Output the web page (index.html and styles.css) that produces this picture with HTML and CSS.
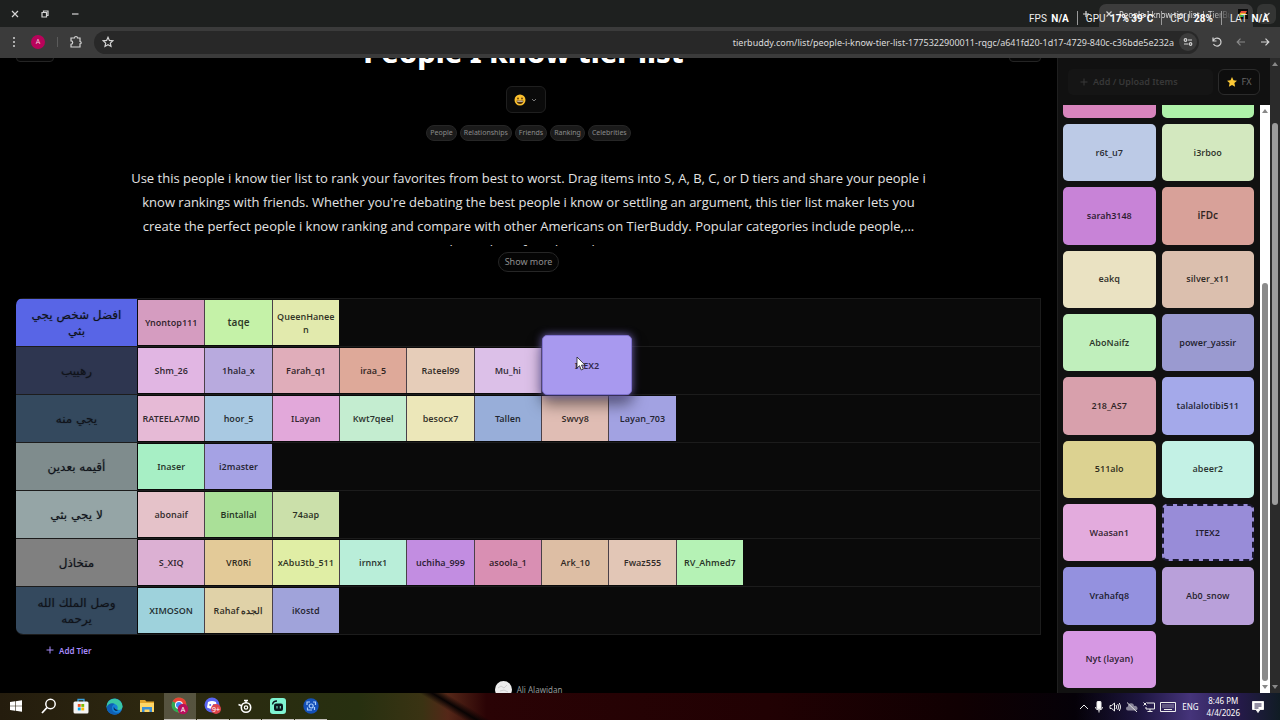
FILE: index.html
```html
<!DOCTYPE html>
<html lang="en">
<head>
<meta charset="utf-8">
<title>People I know tier list | TierBuddy</title>
<link rel="stylesheet" href="styles.css">
</head>
<body>
<header class="titlebar">
  <div class="window-controls">
    <button class="icon-btn" aria-label="Close window"><svg width="10" height="10" viewBox="0 0 10 10"><path d="M2 2l6 6M8 2l-6 6"/></svg></button>
    <button class="icon-btn" aria-label="Restore window"><svg width="10" height="10" viewBox="0 0 10 10"><path d="M2 3.5h4.5v4.500H2zM3.500 3.500V2H8v4.500H6.500"/></svg></button>
    <button class="icon-btn" aria-label="Minimize window"><svg width="10" height="10" viewBox="0 0 10 10"><path d="M2 5h6.500"/></svg></button>
  </div>
  <div class="tabs">
    <button class="icon-btn" aria-label="New tab"><svg width="10" height="10" viewBox="0 0 10 10"><path d="M5 2v6M2 5h6"/></svg></button>
    <div class="tab">
      <button class="icon-btn" aria-label="Close tab"><svg width="8" height="8" viewBox="0 0 8 8"><path d="M1.500 1.500l5 5M6.500 1.500l-5 5"/></svg></button>
      <span class="tab-title">People I know tier list | TierBuddy</span>
      <svg class="favicon" width="10" height="10" viewBox="0 0 10 10"><rect width="10" height="10" fill="#0b0b0b"/><path d="M3 2h6L8 4H2z" fill="#e5533d"/><path d="M2 4h6L7 6H1z" fill="#f0b429"/><path d="M2 6h4L5 8H2z" fill="#37b24d"/></svg>
    </div>
    <button class="tab-search" aria-label="Search tabs"><svg width="8" height="8" viewBox="0 0 8 8"><path d="M1.500 3L4 5.500 6.500 3"/></svg></button>
  </div>
  <div class="overlay">
    <span>FPS <b>N/A</b></span><span>GPU <b>17% 39°C</b></span><span>CPU <b>28%</b></span><span>LAT <b>N/A</b></span>
  </div>
</header>

<nav class="toolbar">
  <button class="icon-btn" aria-label="Menu"><svg width="12" height="12" viewBox="0 0 12 12"><g class="solid"><circle cx="6" cy="2" r="1"/><circle cx="6" cy="6" r="1"/><circle cx="6" cy="10" r="1"/></g></svg></button>
  <button class="avatar" aria-label="Profile">A</button>
  <span class="separator"></span>
  <button class="icon-btn" aria-label="Extensions"><svg width="14" height="14" viewBox="0 0 14 14"><path d="M2 3h3.500a1.500 1.500 0 0 1 3 0H11v3.500a1.200 1.200 0 0 1 0 2.400V12H2V9.300a1.700 1.700 0 0 0 0-3.400z"/></svg></button>
  <div class="address">
    <button class="icon-btn" aria-label="Bookmark"><svg width="12" height="12" viewBox="0 0 12 12"><path d="M6 1.300l1.400 3.100 3.400.4-2.500 2.300.7 3.300L6 8.700l-3 1.700.7-3.300L1.200 4.800l3.400-.4z"/></svg></button>
    <input class="url" aria-label="Address" value="tierbuddy.com/list/people-i-know-tier-list-1775322900011-rqgc/a641fd20-1d17-4729-840c-c36bde5e232a">
    <button class="site-info" aria-label="Site information"><svg width="10" height="10" viewBox="0 0 10 10"><path d="M5 3h4M1 7h4"/><circle cx="2.500" cy="3" r="1.300"/><circle cx="7.500" cy="7" r="1.300"/></svg></button>
  </div>
  <div class="nav-buttons">
    <button class="icon-btn" aria-label="Reload"><svg width="12" height="12" viewBox="0 0 12 12"><path d="M2 1.500V5h3.500M2.300 4.600A4 4 0 1 1 2.500 8"/></svg></button>
    <button class="icon-btn dim" aria-label="Forward"><svg width="12" height="12" viewBox="0 0 12 12"><path d="M10 6H2.500M5.500 2.700L2.200 6l3.300 3.300"/></svg></button>
    <button class="icon-btn" aria-label="Back"><svg width="12" height="12" viewBox="0 0 12 12"><path d="M2 6h7.500M6.500 2.700L9.800 6 6.500 9.300"/></svg></button>
  </div>
</nav>

<div class="page">
  <main class="main">
    <div class="hero">
      <button class="corner-btn" aria-label="Back to lists"></button>
      <h1>People I know tier list</h1>
      <button class="corner-btn corner-end" aria-label="Options"></button>
    </div>
    <button class="emoji-btn" aria-label="React">
      <svg width="12" height="12" viewBox="0 0 12 12"><circle cx="6" cy="6" r="5.500" fill="#fbc02d"/><ellipse cx="4" cy="4.500" rx=".8" ry="1.100" fill="#4e2f0b"/><ellipse cx="8" cy="4.500" rx=".8" ry="1.100" fill="#4e2f0b"/><path d="M2.600 6.500h6.800a3.400 3.400 0 0 1-6.800 0z" fill="#4e2f0b"/><path d="M3.200 6.800h5.600v.8H3.200z" fill="#fff"/></svg>
      <svg class="chevron" width="6" height="6" viewBox="0 0 6 6"><path d="M1 2l2 2 2-2"/></svg>
    </button>
    <div class="tags"><a href="#">People</a><a href="#">Relationships</a><a href="#">Friends</a><a href="#">Ranking</a><a href="#">Celebrities</a></div>
    <p class="description">Use this people i know tier list to rank your favorites from best to worst. Drag items into S, A, B, C, or D tiers and share your people i<br>know rankings with friends. Whether you're debating the best people i know or settling an argument, this tier list maker lets you<br>create the perfect people i know ranking and compare with other Americans on TierBuddy. Popular categories include people,...<br>relationships, friends, ranking.</p>
    <button class="show-more">Show more</button>

    <section class="tiers">
      <div class="tier"><div class="label" dir="rtl" style="--tile:#5865e6">افضل شخص يجي بثي</div><div class="items">
        <div class="item" style="--tile:#d59cc0">Ynontop111</div><div class="item large" style="--tile:#c5f2a8">taqe</div><div class="item" style="--tile:#e2eaad">QueenHaneen</div></div></div>
      <div class="tier"><div class="label" dir="rtl" style="--tile:#2e3650">رهييب</div><div class="items">
        <div class="item" style="--tile:#e1b6e3">Shm_26</div><div class="item" style="--tile:#b8aade">1hala_x</div><div class="item" style="--tile:#e0adba">Farah_q1</div><div class="item" style="--tile:#dea999">iraa_5</div><div class="item" style="--tile:#e6cdb9">Rateel99</div><div class="item" style="--tile:#dcc0e8">Mu_hi</div>
        <div class="drop-slot"><div class="dragged">ITEX2<svg class="cursor" width="10" height="15" viewBox="0 0 10 15"><path d="M1 1v11l2.500-2.300L5.300 14l2-.9-1.800-4H9z" fill="#fff" stroke="#222" stroke-width=".8"/></svg></div></div></div></div>
      <div class="tier"><div class="label" dir="rtl" style="--tile:#34495e">يجي منه</div><div class="items">
        <div class="item" style="--tile:#e6bad6">RATEELA7MD</div><div class="item" style="--tile:#a9c9e2">hoor_5</div><div class="item" style="--tile:#e2a8da">ILayan</div><div class="item" style="--tile:#c4edd0">Kwt7qeel</div><div class="item" style="--tile:#ece7b9">besocx7</div><div class="item" style="--tile:#98aed9">Tallen</div><div class="item" style="--tile:#e0bdb4">Swvy8</div><div class="item" style="--tile:#a2a2e2">Layan_703</div></div></div>
      <div class="tier"><div class="label" dir="rtl" style="--tile:#7f8c8d">أقيمه بعدين</div><div class="items">
        <div class="item" style="--tile:#a7efc5">Inaser</div><div class="item" style="--tile:#a5a2e4">i2master</div></div></div>
      <div class="tier"><div class="label" dir="rtl" style="--tile:#95a5a6">لا يجي بثي</div><div class="items">
        <div class="item" style="--tile:#e5c2c9">abonaif</div><div class="item" style="--tile:#aae098">Bintallal</div><div class="item" style="--tile:#cbe0aa">74aap</div></div></div>
      <div class="tier"><div class="label" dir="rtl" style="--tile:#808080">متخاذل</div><div class="items">
        <div class="item" style="--tile:#dcb0d3">S_XIQ</div><div class="item" style="--tile:#e3ca98">VR0Ri</div><div class="item" style="--tile:#e0eea5">xAbu3tb_511</div><div class="item" style="--tile:#b9eed9">irnnx1</div><div class="item" style="--tile:#c28de1">uchiha_999</div><div class="item" style="--tile:#d98fb3">asoola_1</div><div class="item" style="--tile:#ddbea4">Ark_10</div><div class="item" style="--tile:#e2c6b6">Fwaz555</div><div class="item" style="--tile:#b5f2b5">RV_Ahmed7</div></div></div>
      <div class="tier"><div class="label" dir="rtl" style="--tile:#34495e">وصل الملك الله يرحمه</div><div class="items">
        <div class="item" style="--tile:#9ed2dc">XIMOSON</div><div class="item" style="--tile:#e0d2a8">Rahaf الجده</div><div class="item" style="--tile:#a0a3da">iKostd</div></div></div>
    </section>
    <button class="add-tier"><svg width="8" height="8" viewBox="0 0 8 8"><path d="M4 .5v7M.5 4h7"/></svg>Add Tier</button>
    <div class="author"><svg width="17" height="17" viewBox="0 0 17 17"><circle cx="8.500" cy="8.500" r="8.500" fill="#ececec"/><path d="M3 7l3-2 3 2 3-3M5 10l4-1 4 2" stroke="#cfcfcf"/></svg><span>Ali Alawidan</span></div>
  </main>

  <aside class="sidebar">
    <div class="sidebar-head">
      <button class="upload"><svg width="8" height="8" viewBox="0 0 8 8"><path d="M4 .5v7M.5 4h7"/></svg>Add / Upload Items</button>
      <button class="fx"><svg width="10" height="10" viewBox="0 0 10 10"><path d="M5 0l1.500 3.300 3.500.4-2.600 2.400.7 3.600L5 7.900 1.900 9.700l.7-3.600L0 3.700l3.500-.4z" fill="#fcc936"/></svg>FX</button>
    </div>
    <div class="pool">
      <div class="cards">
        <div class="card" style="--tile:#d884bd"></div><div class="card" style="--tile:#aff2a9"></div>
        <div class="card" style="--tile:#bccae6">r6t_u7</div><div class="card" style="--tile:#d3e8bf">i3rboo</div>
        <div class="card" style="--tile:#c883d7">sarah3148</div><div class="card large" style="--tile:#d8a199">iFDc</div>
        <div class="card" style="--tile:#eae2c2">eakq</div><div class="card" style="--tile:#dbbfae">silver_x11</div>
        <div class="card" style="--tile:#c0efbc">AboNaifz</div><div class="card" style="--tile:#9a9ad0">power_yassir</div>
        <div class="card" style="--tile:#d8a0ac">218_AS7</div><div class="card" style="--tile:#a4a9ea">talalalotibi511</div>
        <div class="card" style="--tile:#dcd291">511alo</div><div class="card" style="--tile:#c3f1e5">abeer2</div>
        <div class="card" style="--tile:#e3abdd">Waasan1</div><div class="card picked" style="--tile:#988cd8">ITEX2</div>
        <div class="card" style="--tile:#9491df">Vrahafq8</div><div class="card" style="--tile:#b9a0da">Ab0_snow</div>
        <div class="card" style="--tile:#d698e3">Nyt (layan)</div>
      </div>
      <div class="scroll light"><i class="up"></i><div class="track"><div class="thumb"></div></div><i class="down"></i></div>
    </div>
  </aside>
  <div class="scroll dark"><i class="up"></i><div class="track"><div class="thumb"></div></div><i class="down"></i></div>
</div>

<footer class="taskbar">
  <div class="apps">
    <button aria-label="Start"><svg width="14" height="14" viewBox="0 0 14 14"><path d="M1 3l5-.7v4.400H1zM6.600 2.200L13 1.300v5.400H6.600zM1 7.300h5v4.400L1 11zM6.600 7.300H13v5.400l-6.400-.9z" fill="#fff"/></svg></button>
    <button aria-label="Search"><svg width="16" height="16" viewBox="0 0 16 16"><circle cx="9.500" cy="6" r="4.700" stroke="#fff" stroke-width="1.500"/><path d="M6 9.500L1 15" stroke="#fff" stroke-width="1.800"/></svg></button>
    <button aria-label="Store"><svg width="16" height="16" viewBox="0 0 16 16"><path d="M5 4V1.500h6V4" stroke="#3aa0dd" stroke-width="1.300"/><rect x=".5" y="3.500" width="15" height="12" rx="1.500" fill="#f4f4f4"/><path d="M4.800 6h2.900v2.900H4.800z" fill="#f25022"/><path d="M8.300 6h2.900v2.900H8.300z" fill="#7fba00"/><path d="M4.800 9.500h2.900v2.900H4.800z" fill="#00a4ef"/><path d="M8.300 9.500h2.900v2.900H8.300z" fill="#ffb900"/></svg></button>
    <button aria-label="Edge"><svg width="17" height="17" viewBox="0 0 17 17"><circle cx="8.500" cy="8.500" r="8" fill="#1583d8"/><path d="M1 6a8 8 0 0 1 15.500 2.500c0 3-3 4-5.500 3 1.500-2 .5-5-2.500-5.500C5 5.400 2 7 .6 9.500z" fill="#39c7a5"/><path d="M.6 9.500C2 5.500 6 4.500 9 6 5.500 7 5 11 7.500 13.500c2 1.700 5 1.500 7.500 0-2 3-6 4-9.500 2.500A8 8 0 0 1 .6 9.500z" fill="#0e5fb4"/><path d="M8 8.500c0 2 1.500 3.500 4.500 3.500L10 13C8 12.500 7 10.500 8 8.500z" fill="#0b2540"/></svg></button>
    <button aria-label="File Explorer"><svg width="16" height="14" viewBox="0 0 16 14"><path d="M1 1h5l1.500 1.500H15V12H1z" fill="#e3a52a"/><path d="M1 4h14v9H1z" fill="#ffd766"/><path d="M3 8h10v5h-2.500v-2.500h-5V13H3z" fill="#3c90d6"/></svg></button>
    <button class="open active" aria-label="Chrome"><svg width="18" height="18" viewBox="0 0 18 18"><circle cx="8" cy="8" r="7.500" fill="#34a853"/><path d="M1.500 4.300A7.500 7.500 0 0 1 15.500 8H8z" fill="#ea4335"/><path d="M8 8h7.500a7.500 7.500 0 0 1-8 7.500z" fill="#fbbc05"/><circle cx="8" cy="8" r="4" fill="#fff"/><circle cx="8" cy="8" r="3" fill="#4285f4"/><circle cx="12" cy="12" r="5.300" fill="#b80f5c"/><text class="badge-text" x="12" y="15">A</text></svg></button>
    <button class="open" aria-label="Discord"><svg width="18" height="18" viewBox="0 0 18 18"><circle cx="8" cy="8" r="7.500" fill="#5865f2"/><path d="M4 5q4-1.800 8 0l1 5.500q-5 2.500-10 0z" fill="#fff"/><circle cx="6.200" cy="8" r="1" fill="#5865f2"/><circle cx="9.800" cy="8" r="1" fill="#5865f2"/><circle cx="12" cy="12" r="5" fill="#dd444c"/><text class="badge-text" x="12" y="15">9+</text></svg></button>
    <button class="open" aria-label="SteelSeries"><svg width="16" height="16" viewBox="0 0 16 16"><circle cx="9" cy="9.500" r="4.700" stroke="#fff" stroke-width="1.600"/><circle cx="9" cy="9.500" r="1.700" stroke="#fff" stroke-width="1.200"/><path d="M1.500 6.500L5 8M7 2.500h4M9 2.500V5" stroke="#fff" stroke-width="1.500"/></svg></button>
    <button class="open" aria-label="Streamlabs"><svg width="16" height="16" viewBox="0 0 16 16"><rect width="16" height="16" rx="3" fill="#80f5d2"/><rect x="4" y="5.500" width="9" height="7.500" rx="2" fill="#09161d"/><path d="M2.500 6.500Q3 3 7 3" stroke="#09161d" stroke-width="1.300"/><path d="M7 8v2.500M10.300 8v2.500" stroke="#80f5d2"/></svg></button>
    <button class="open" aria-label="Capture"><svg width="16" height="16" viewBox="0 0 16 16"><circle cx="8" cy="8" r="7.700" fill="#1450b8"/><path d="M7 4H4v3M9 12H4.500V9.500M10 4h2.500v3M11.500 9v3" stroke="#a9cdfb" stroke-width="1.200"/><circle cx="8.200" cy="8" r="2" stroke="#a9cdfb" stroke-width="1.200"/></svg></button>
  </div>
  <div class="tray">
    <svg width="10" height="10" viewBox="0 0 10 10"><path d="M1 7l4-4 4 4"/></svg>
    <svg width="10" height="12" viewBox="0 0 10 12"><rect x="3" y="0" width="4" height="8" rx="1.500" fill="#fff"/><path d="M1.500 6q0 3 3.500 3t3.500-3M5 9v2.500"/></svg>
    <svg width="12" height="12" viewBox="0 0 12 12"><path d="M1 4.500h1.700L5.500 2v8L2.700 7.500H1zM7 4q1.500 2 0 4M8.700 3q2.300 3 0 6M10.300 2q3 4 0 8"/></svg>
    <svg width="12" height="12" viewBox="0 0 12 12"><path d="M2 9.500a2 2 0 0 1 0-4 3 3 0 0 1 6-.5 2.300 2.300 0 0 1 2 4.500z" fill="#8b879b" stroke="none"/><path d="M1 1.500l10 9.500" stroke="#ddd"/></svg>
    <svg width="12" height="12" viewBox="0 0 12 12"><path d="M4 2h7.500v6H3V6M7 8v2.500M4.500 10.500h5M.5 1.500l3 3M3.500 1.500l-3 3"/></svg>
    <svg width="16" height="10" viewBox="0 0 16 10"><path d="M.5 .5h15v9H.5z"/><path d="M2.500 3h11M2.500 5h11" stroke-dasharray="1 1"/><path d="M4 7.500h8"/></svg>
    <span class="lang">ENG</span>
    <time class="clock">8:46 PM<br>4/4/2026</time>
    <svg width="12" height="12" viewBox="0 0 12 12"><path d="M.5 .5h11v8H8L6 11.500 4 8.500H.5z" fill="#fff"/><path d="M2.500 3h7M2.500 5h7M2.500 7h4" stroke="#28204a"/></svg>
  </div>
</footer>
</body>
</html>
```
FILE: styles.css
```css
* { box-sizing: border-box; }
body {
  margin: 0;
  height: 100vh;
  display: flex;
  flex-direction: column;
  overflow: hidden;
  background: #000;
  color: #e8e8e8;
  font-family: "Noto Sans", "Open Sans", sans-serif;
  font-size: 10px;
}
button, input { font: inherit; color: inherit; background: none; border: 0; padding: 0; margin: 0; }
a { color: inherit; text-decoration: none; }
svg { fill: none; stroke: none; display: block; flex: none; }
.icon-btn svg, .tab-search svg, .site-info svg { stroke: #d5d5d5; stroke-width: 1.2; }
.icon-btn { display: flex; align-items: center; justify-content: center; }
.icon-btn .solid { fill: #d5d5d5; stroke: none; }
.icon-btn.dim { opacity: .5; }

.titlebar { position: relative; flex: none; height: 27px; display: flex; justify-content: space-between; background: #1e201f; }
.window-controls { display: flex; align-items: center; gap: 20px; padding-left: 10px; }
.tabs { display: flex; align-items: center; gap: 4px; padding: 4px 4px 0 0; }
.tabs > .icon-btn { margin: 0 4px 4px 0; }
.tab { display: flex; align-items: center; width: 154px; height: 23px; padding: 0 5px 3px 6px; background: #3c3c3c; border-radius: 7px 7px 0 0; }
.tab-title { flex: 1; margin: 0 6px; overflow: hidden; white-space: nowrap; font-size: 8px; color: #ddd; -webkit-mask-image: linear-gradient(90deg, #000 80%, transparent); mask-image: linear-gradient(90deg, #000 80%, transparent); }
.tab-search { width: 19px; height: 20px; margin-bottom: 3px; border-radius: 6px; background: #343534; display: flex; align-items: center; justify-content: center; }
.overlay { position: absolute; right: 11px; top: 11px; display: flex; gap: 17px; font-family: Roboto, sans-serif; font-size: 10px; line-height: 16px; color: #eee; white-space: nowrap; }
.overlay span { position: relative; }
.overlay span + span::before { content: ""; position: absolute; left: -9px; top: 0; height: 14px; border-left: 1px solid #999; }
.overlay b { margin-left: 2px; color: #fff; }

.toolbar { flex: none; height: 31px; display: flex; align-items: center; background: #3b3b3b; padding: 0 8px 1px; }
.avatar { width: 14px; height: 14px; margin-left: 11px; border-radius: 50%; background: #b8035a; color: #f5c8dc; font-size: 7px; line-height: 14px; }
.separator { width: 1px; height: 10px; margin: 0 11px 0 12px; background: #5b5b5b; }
.address { flex: 1; display: flex; align-items: center; height: 23px; margin-left: 11px; padding: 0 2px 0 8px; border-radius: 12px; background: #282828; }
.url { flex: 1; min-width: 0; margin: 0 5px; text-align: right; font-size: 9px; color: #dcdcdc; outline: 0; }
.site-info { width: 18px; height: 18px; border-radius: 50%; background: #3c3c3c; display: flex; align-items: center; justify-content: center; }
.nav-buttons { display: flex; gap: 12px; padding: 0 1px 0 12px; }

.page { flex: 1; min-height: 0; display: flex; }
.main { flex: 1; min-width: 0; overflow: hidden; display: flex; flex-direction: column; align-items: center; padding: 0 16px; }
.hero { align-self: stretch; display: flex; align-items: flex-end; justify-content: space-between; height: 40px; margin-top: -27px; flex: none; }
.hero h1 { margin: 0 16px 0 0; font-size: 29px; line-height: 38px; font-weight: 800; color: #fff; white-space: nowrap; }
.corner-btn { width: 38px; height: 30px; margin-bottom: 9px; border: 1px solid #242424; border-radius: 4px; background: #070707; }
.corner-end { width: 32px; }
.emoji-btn { flex: none; display: flex; align-items: center; justify-content: center; gap: 5px; width: 40px; height: 27px; margin: 15px 6px 0 0; border: 1px solid #1f1f1f; border-radius: 6px; background: #0a0a0a; }
.chevron { stroke: #777; }
.tags { flex: none; display: flex; gap: 3px; margin-top: 12px; }
.tags a { height: 16px; padding: 0 3px; border: 1px solid #262626; border-radius: 8px; background: #1a1a1a; color: #8b8b8b; font-size: 7px; line-height: 14px; }
.description { flex: none; margin: 25px 0 0; height: 80px; overflow: hidden; text-align: center; white-space: nowrap; font-family: "Open Sans", sans-serif; font-size: 13px; line-height: 24px; color: #e3e3e3; }
.show-more { flex: none; height: 20px; margin-top: 6px; padding: 0 6px; border: 1px solid #262626; border-radius: 10px; background: #050505; color: #8f8f8f; font-size: 9px; line-height: 18px; }

.tiers { flex: none; align-self: stretch; margin-top: 26px; border: 1px solid #1c1c1c; border-top: 0; border-left: 0; border-radius: 7px 0 0 7px; overflow: hidden; background: #0a0a0a; }
.tier { display: flex; height: 48px; border-top: 1px solid #1c1c1c; }
.label { flex: none; width: 121px; display: flex; align-items: center; justify-content: center; padding: 0 10px; background: var(--tile); color: #10131a; text-align: center; font-family: "DejaVu Sans", sans-serif; font-size: 12px; line-height: 16px; text-shadow: 0 0 1px rgb(16 19 26 / .5); }
.items { width: 607px; padding: 1px 0 1px 1px; display: grid; grid-template-columns: repeat(9, 1fr); }
.item, .card { display: flex; align-items: center; justify-content: center; background: var(--tile); color: rgb(0 0 0 / .78); font-size: 9px; line-height: 13px; font-weight: 600; text-align: center; overflow-wrap: anywhere; }
.item { border-right: 1px solid #4a4048; padding: 0 4px; min-width: 0; }
.item:last-child { border-right-color: transparent; background-clip: padding-box; }
.item.large, .card.large { font-size: 10px; }
.drop-slot { position: relative; }
.dragged { position: absolute; z-index: 2; left: 0; top: -13px; width: 90px; height: 60px; display: flex; align-items: center; justify-content: center; border: 1px solid #8073cf; border-radius: 5px; background: #a899ef; color: #30294d; font-size: 9px; font-weight: 600; box-shadow: 0 0 8px #7666bb, 0 9px 15px rgb(0 0 0 / .5); }
.cursor { position: absolute; left: 33px; top: 20px; }
.tiers .tier:nth-child(2) { position: relative; }
.add-tier { flex: none; align-self: flex-start; display: flex; align-items: center; gap: 5px; height: 14px; margin: 8px 0 0 30px; color: #a78bfa; font-size: 8px; font-weight: 600; }
.add-tier svg { stroke: #a78bfa; }
.author { flex: none; display: flex; align-items: center; gap: 5px; margin-top: 24px; color: #999; font-size: 8px; }

.sidebar { flex: none; width: 213px; display: flex; flex-direction: column; background: #111; border-left: 1px solid #1f1f1f; }
.sidebar-head { flex: none; height: 47px; display: flex; align-items: center; gap: 5px; padding: 0 10px 0 10px; }
.upload { flex: 1; display: flex; align-items: center; gap: 5px; height: 26px; padding-left: 12px; border-radius: 5px; background: #151515; color: #383838; font-size: 9px; font-weight: 600; }
.upload svg { stroke: #383838; }
.fx { flex: none; width: 42px; height: 26px; display: flex; align-items: center; justify-content: center; gap: 5px; border: 1px solid #2b2b2b; border-radius: 6px; background: #0d0d0d; color: #666; font-size: 9px; }
.pool { flex: 1; min-height: 0; display: flex; }
.cards { flex: 1; display: grid; grid-template-columns: 1fr 1fr; gap: 6px; align-content: end; overflow: hidden; padding: 0 6px 5px 5px; }
.card { aspect-ratio: 50 / 31; border-radius: 5px; padding-bottom: 1px; }
.card.picked { border: 2px dashed #1b1830; }

.scroll { flex: none; width: 10px; display: flex; flex-direction: column; align-items: center; padding: 4px 0; }
.scroll i { border: 3px solid transparent; }
.scroll .up { border-top: 0; border-bottom: 4px solid #888; }
.scroll .down { border-bottom: 0; border-top: 4px solid #888; }
.track { flex: 1; align-self: stretch; display: flex; flex-direction: column; padding: 0 2px; }
.thumb { border-radius: 3px; background: #8b8b8b; }
.light { background: #fff; }
.light .track { justify-content: flex-end; padding-bottom: 4px; }
.light .thumb { height: 70%; }
.dark { background: #2b2b2b; }
.dark .track { padding-top: 57px; }
.dark .thumb { height: 68%; background: #9b9b9b; }

.taskbar {
  flex: none;
  height: 27px;
  display: flex;
  justify-content: space-between;
  color: #fff;
  background:
    linear-gradient(90deg, transparent 84%, #1d153f 89%, #45347a 93%, #241a48 97%, #101c24),
    linear-gradient(31deg, transparent 35%, #080303 36%, transparent 37%),
    linear-gradient(90deg, #241c0d, #2d2810 12%, #273010 28%, #3a3313 33%, #552718 35%, #2a0305 38%, #210103 60%, #100002 75%, #050108 84%, transparent 92%);
}
.apps { width: 327px; display: grid; grid-template-columns: repeat(10, 1fr); gap: 1px; }
.apps button { display: flex; align-items: center; justify-content: center; border-bottom: 1px solid transparent; }
.apps .open { border-bottom-color: #c3bfb8; }
.apps .active { background: rgb(255 255 255 / .2); }
.badge-text { fill: #fff; font-size: 7px; text-anchor: middle; }
.tray { display: flex; align-items: center; gap: 5px; padding-right: 16px; }
.tray svg { stroke: #eee; }
.lang { margin: 0 3px 0 1px; font-size: 8px; }
.clock { margin-right: 7px; font-size: 8px; line-height: 12px; text-align: center; }
```
